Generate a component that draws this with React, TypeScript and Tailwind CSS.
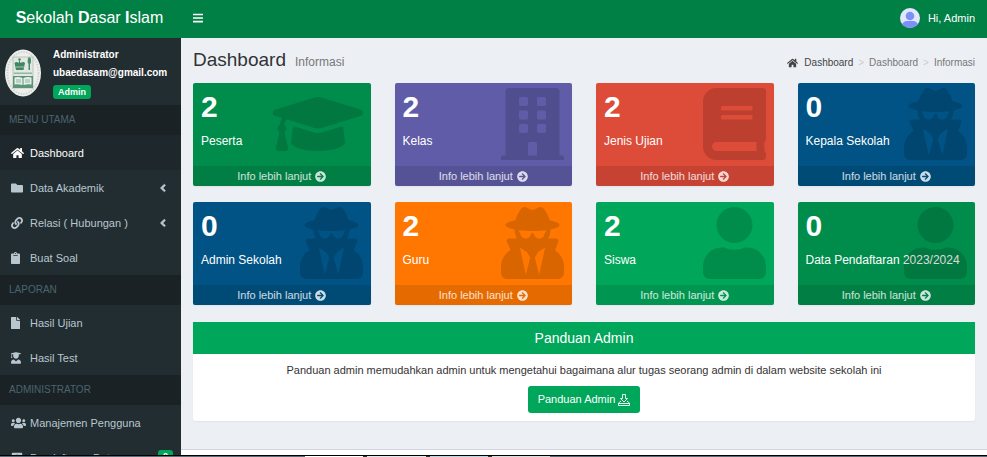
import type { ReactNode } from "react";
import type { IconType } from "react-icons";
import {
  FaAngleLeft,
  FaArrowCircleRight,
  FaBars,
  FaBook,
  FaBuilding,
  FaClipboard,
  FaFile,
  FaFolder,
  FaGraduationCap,
  FaHome,
  FaLink,
  FaPlusSquare,
  FaUser,
  FaUserGraduate,
  FaUsers,
  FaUserSecret,
} from "react-icons/fa";

type Stat = { value: number; label: string; color: string; icon: IconType; iconWidth?: string };

const stats: Stat[] = [
  { value: 2, label: "Peserta", color: "bg-[#008d4c]", icon: FaGraduationCap, iconWidth: "w-[90px]" },
  { value: 2, label: "Kelas", color: "bg-[#605ca8]", icon: FaBuilding },
  { value: 2, label: "Jenis Ujian", color: "bg-[#dd4b39]", icon: FaBook },
  { value: 0, label: "Kepala Sekolah", color: "bg-[#005384]", icon: FaUserSecret },
  { value: 0, label: "Admin Sekolah", color: "bg-[#005384]", icon: FaUserSecret },
  { value: 2, label: "Guru", color: "bg-[#ff7701]", icon: FaUserSecret },
  { value: 2, label: "Siswa", color: "bg-[#00a65a]", icon: FaUser },
  { value: 0, label: "Data Pendaftaran 2023/2024", color: "bg-[#008d4c]", icon: FaUser },
];

function SchoolLogo() {
  return (
    <svg viewBox="0 0 36 48" className="h-12 w-9 shrink-0" role="img" aria-label="Logo sekolah">
      <ellipse cx="18" cy="24" rx="18" ry="23.5" fill="#eeefed" />
      <ellipse cx="18" cy="24" rx="15.5" ry="21" fill="none" stroke="#d0d5d1" strokeWidth="2" strokeDasharray="1.5 1.2" />
      <rect x="8" y="8" width="20" height="31" fill="#e1e8e2" stroke="#96aa9d" strokeWidth=".6" />
      <path d="M9.500 14q2-2 4 0l1-3 1 3q3-2 4.500 0l-1.500 7H11z" fill="#3f8763" />
      <circle cx="14.500" cy="10.500" r="1.200" fill="#3f8763" />
      <path d="M10.500 18h9" stroke="#cfe0d5" strokeWidth=".7" />
      <path d="M23 9q3-2 3 2t-1 4v6h-1.500v-6q-1.500-2-.5-6z" fill="#4b8c6a" />
      <path d="M9 23.500h18v1.500H9z" fill="#93b5a1" />
      <path d="M8 27h20v12H8z" fill="#5b9477" />
      <path d="M9.500 28.500q4-1 8 .5v7q-4-1-8-.5zM18.500 29q4-1.500 8-.5v7q-4-.5-8 .5z" fill="#e6eee9" />
      <path d="M11 31h5M11 33h5M20 31h5M20 33h5" stroke="#679b80" strokeWidth=".7" />
    </svg>
  );
}

function Avatar() {
  return (
    <svg viewBox="0 0 20 20" className="size-5" aria-hidden="true">
      <defs>
        <clipPath id="avatar-round">
          <circle cx="10" cy="10" r="10" />
        </clipPath>
      </defs>
      <g clipPath="url(#avatar-round)">
        <rect width="20" height="20" fill="#e0e7ff" />
        <circle cx="10" cy="8" r="4.300" fill="#7d8ff9" />
        <path d="M2 20v-3q1-4 5-4h6q4 0 5 4v3z" fill="#7d8ff9" />
      </g>
    </svg>
  );
}

function DownloadIcon() {
  return (
    <svg viewBox="0 0 12 12" className="size-3" fill="none" stroke="currentColor" strokeWidth=".9" aria-hidden="true">
      <path d="M4.500.5h3v4h2L6 8 2.500 4.500h2z" />
      <path d="M3 7L.5 9v2.500h11V9L9 7M.5 9.500h11" />
    </svg>
  );
}

function MenuHeading({ children }: { children: ReactNode }) {
  return (
    <h2 className="flex h-[30px] shrink-0 items-center bg-[#1a2226] px-[9px] pb-[2px] text-[10px] text-[#4b646f]">
      {children}
    </h2>
  );
}

type MenuItemProps = {
  icon: IconType;
  iconWidth: string;
  label: string;
  active?: boolean;
  expandable?: boolean;
  badge?: number;
};

function MenuItem({ icon: Icon, iconWidth, label, active, expandable, badge }: MenuItemProps) {
  return (
    <a
      href="#"
      className={`flex h-[35px] shrink-0 items-center pt-px pr-2 pl-[11px] text-[11px] ${
        active ? "bg-[#1e282c] text-white" : "text-[#b8c7ce]"
      }`}
    >
      <span className="w-[19px] shrink-0">
        <Icon className={`h-3 ${iconWidth}`} />
      </span>
      <span className="flex-1 whitespace-nowrap">{label}</span>
      {expandable && <FaAngleLeft className="mr-1 size-3" stroke="currentColor" strokeWidth="20" />}
      {badge !== undefined && (
        <span className="rounded-[3px] bg-[#00a65a] px-[5px] pb-[4px] text-[9px] leading-3 font-bold text-white">
          {badge}
        </span>
      )}
    </a>
  );
}

function StatCard({ value, label, color, icon: Icon, iconWidth = "w-[63px]" }: Stat) {
  return (
    <article className={`relative overflow-hidden rounded-xs text-white shadow-xs ${color}`}>
      <div className="px-2 pt-2 pb-4">
        <p className="text-3xl leading-8 font-bold">{value}</p>
        <p className="mt-[10px] text-xs leading-[17px] whitespace-nowrap">{label}</p>
      </div>
      <Icon className={`absolute top-[5px] right-2 h-[72px] text-black/15 ${iconWidth}`} />
      <a href="#" className="flex h-5 items-center justify-center gap-1 bg-black/10 text-[11px] text-white/80">
        Info lebih lanjut
        <FaArrowCircleRight className="size-[11px]" />
      </a>
    </article>
  );
}

export default function App() {
  return (
    <div className="flex h-screen flex-col overflow-hidden bg-[#ecf0f5] font-['Liberation_Sans',Arial,sans-serif] text-[#333]">
      <header className="flex h-[38px] shrink-0 items-center bg-[#008045] pb-[2px] text-white">
        <a href="#" className="w-[179px] text-center text-base">
          <b>S</b>ekolah <b>D</b>asar <b>I</b>slam
        </a>
        <button type="button" aria-label="Menu" className="ml-[14px]">
          <FaBars className="h-3 w-[10px]" />
        </button>
        <button type="button" className="mr-3 ml-auto flex items-center gap-2 text-[11px]">
          <Avatar />
          Hi, Admin
        </button>
      </header>

      <div className="flex min-h-0 flex-1">
        <aside className="flex w-[181px] shrink-0 flex-col overflow-hidden bg-[#222d32]">
          <div className="flex h-[67px] shrink-0 items-center gap-3 pt-[2px] pl-[5px] text-white">
            <SchoolLogo />
            <div className="text-[10px] font-bold">
              <p className="leading-[18px]">Administrator</p>
              <p className="leading-[18px]">ubaedasam@gmail.com</p>
              <span className="mt-[3px] block w-fit rounded-[3px] bg-[#00a65a] px-[5px] text-[9px] leading-[14px]">
                Admin
              </span>
            </div>
          </div>
          <nav className="flex flex-col">
            <MenuHeading>MENU UTAMA</MenuHeading>
            <MenuItem icon={FaHome} iconWidth="w-[13px]" label="Dashboard" active />
            <MenuItem icon={FaFolder} iconWidth="w-3" label="Data Akademik" expandable />
            <MenuItem icon={FaLink} iconWidth="w-3" label="Relasi ( Hubungan )" expandable />
            <MenuItem icon={FaClipboard} iconWidth="w-[9px]" label="Buat Soal" />
            <MenuHeading>LAPORAN</MenuHeading>
            <MenuItem icon={FaFile} iconWidth="w-[9px]" label="Hasil Ujian" />
            <MenuItem icon={FaUserGraduate} iconWidth="w-[10px]" label="Hasil Test" />
            <MenuHeading>ADMINISTRATOR</MenuHeading>
            <MenuItem icon={FaUsers} iconWidth="w-[15px]" label="Manajemen Pengguna" />
            <MenuItem icon={FaPlusSquare} iconWidth="w-3" label="Pendaftaran Data" badge={0} />
          </nav>
        </aside>

        <div className="flex min-w-0 flex-1 flex-col">
          <main className="flex-1 px-3">
            <div className="flex h-[45px] items-center justify-between">
              <h1 className="flex items-baseline gap-[9px] text-[19px]">
                Dashboard <small className="text-xs text-[#777]">Informasi</small>
              </h1>
              <nav aria-label="Breadcrumb" className="mt-1 flex items-center text-[10px] text-[#777]">
                <a href="#" className="flex items-center gap-[6px] text-[#444]">
                  <FaHome className="h-[10px] w-[11px]" />
                  Dashboard
                </a>
                <span className="px-[5px] text-[#ccc]">&gt;</span>
                <a href="#">Dashboard</a>
                <span className="px-[5px] text-[#ccc]">&gt;</span>
                <span>Informasi</span>
              </nav>
            </div>

            <section className="grid grid-cols-4 gap-x-6 gap-y-4">
              {stats.map((stat) => (
                <StatCard key={stat.label} {...stat} />
              ))}
            </section>

            <section className="mt-[17px] rounded-b-[3px] bg-white text-center shadow-xs">
              <h2 className="bg-[#00a65a] text-sm leading-8 text-white">Panduan Admin</h2>
              <div className="px-2 pt-2 pb-2">
                <p className="text-[11px] leading-4">
                  Panduan admin memudahkan admin untuk mengetahui bagaimana alur tugas seorang admin di dalam website
                  sekolah ini
                </p>
                <button
                  type="button"
                  className="mx-auto mt-2 flex h-[27px] items-center gap-[3px] rounded-[3px] bg-[#00a65a] px-[10px] text-[11px] text-white"
                >
                  Panduan Admin
                  <DownloadIcon />
                </button>
              </div>
            </section>
          </main>
          <footer className="h-[6px] shrink-0 border-t border-[#d2d6de] bg-white" />
        </div>
      </div>

      <div className="flex h-[2px] shrink-0 border-t border-black bg-[#5b6b78]">
        <div className="ml-[305px] flex w-[245px] gap-1 bg-[#333]">
          <span className="flex-1 bg-white" />
          <span className="flex-1 bg-[#e4e8ec]" />
          <span className="flex-1 bg-[#b8d8e8]" />
          <span className="flex-1 bg-[#d8dde0]" />
        </div>
      </div>
    </div>
  );
}
